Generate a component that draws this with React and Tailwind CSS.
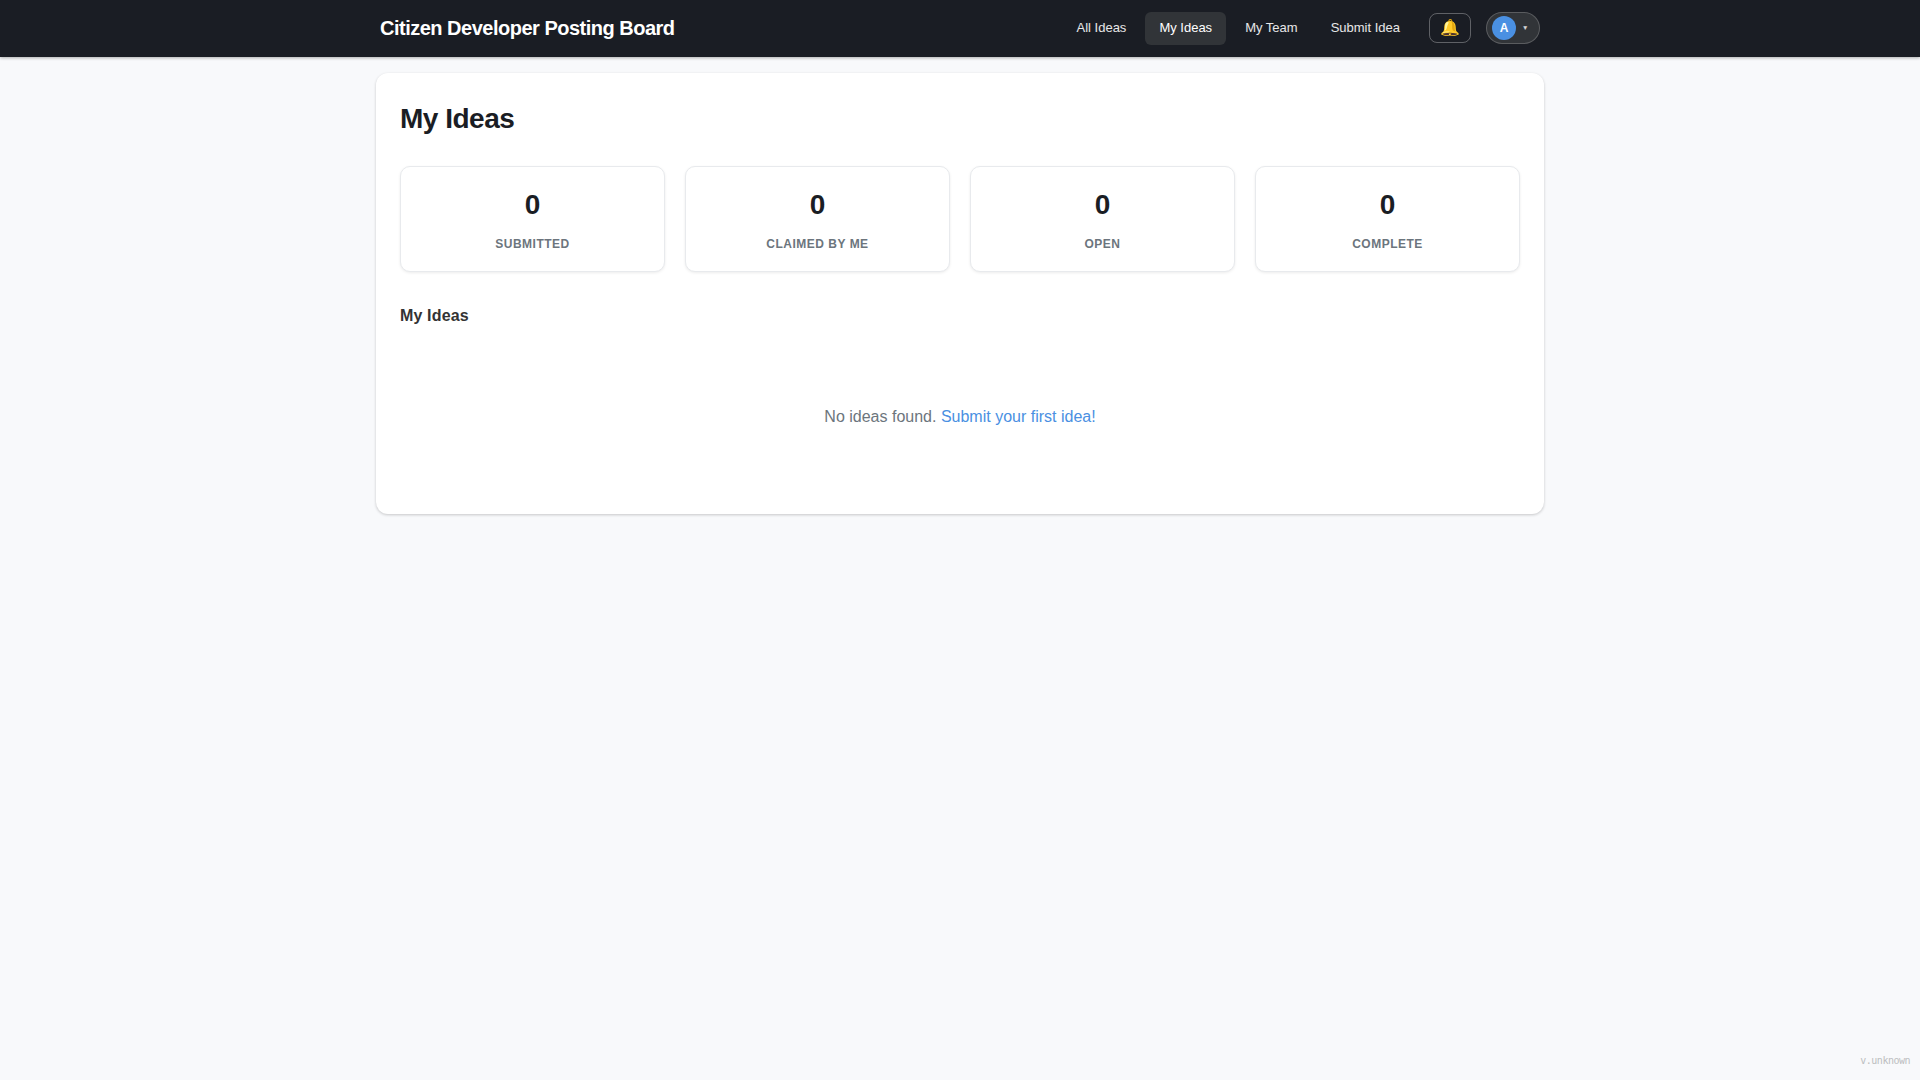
const navItems = ["All Ideas", "My Ideas", "My Team", "Submit Idea"];
const stats = ["Submitted", "Claimed by me", "Open", "Complete"];

export default function App() {
  return (
    <div className="flex min-h-screen flex-col bg-[#f8f9fb] font-['Liberation_Sans',sans-serif] text-[#333333]">
      <header className="h-[57px] bg-[#1a1d24] shadow-[0_1px_3px_rgba(0,0,0,0.3)]">
        <div className="mx-auto flex h-14 w-[1160px] items-center justify-between">
          <h1 className="text-[20px] font-bold tracking-[-0.5px] text-white">Citizen Developer Posting Board</h1>
          <nav className="flex items-center">
            <div className="mt-px flex gap-[5px]">
              {navItems.map((label) => (
                <a
                  key={label}
                  className={
                    "flex h-[33px] items-center rounded-md px-[14px] pb-px text-[13px] " +
                    (label === "My Ideas" ? "bg-[#313438] text-white" : "text-white/90")
                  }
                >
                  {label}
                </a>
              ))}
            </div>
            <button className="ml-[15px] flex h-[30px] w-[42px] items-center justify-center rounded-lg border border-white/30 text-[16px]">🔔</button>
            <button className="ml-[15px] flex h-8 w-[54px] items-center gap-1.5 rounded-full border border-white/20 bg-[#313438] pl-[5px]">
              <span className="flex size-6 items-center justify-center rounded-full bg-[#4a90e2] text-[12px] font-bold text-white">A</span>
              <span className="text-[6.5px] leading-3 text-white/80">▼</span>
            </button>
          </nav>
        </div>
      </header>
      <main className="mx-auto mt-4 h-[441px] w-[1168px] rounded-xl bg-white p-6 shadow-[0_1px_3px_rgba(0,0,0,0.2)]">
        <h2 className="mt-1 text-[28px] leading-9 font-bold tracking-[-0.5px] text-[#1a1d24]">My Ideas</h2>
        <div className="mt-[29px] grid grid-cols-4 gap-5">
          {stats.map((label) => (
            <div key={label} className="flex h-[106px] flex-col items-center rounded-[10px] border border-[#e8eaed] bg-white pt-5 shadow-[0_1px_3px_rgba(0,0,0,0.08)]">
              <div className="text-[28px] leading-9 font-bold text-[#1a1d24]">0</div>
              <div className="mt-[13px] text-[12px] leading-4 font-bold tracking-[0.5px] text-[#6c757d] uppercase">{label}</div>
            </div>
          ))}
        </div>
        <h3 className="mt-8 text-[16px] leading-6 font-bold tracking-[0.15px]">My Ideas</h3>
        <p className="mt-[77px] text-center text-[16px] leading-6 text-[#6c757d]">
          No ideas found. <a className="text-[#4a90e2]">Submit your first idea!</a>
        </p>
      </main>
      <footer className="mt-auto pr-2.5 pb-[11px] text-right font-['DejaVu_Sans_Mono',monospace] text-[10px] leading-4 tracking-[-0.5px] text-[#bcbec0]">v.unknown</footer>
    </div>
  );
}
